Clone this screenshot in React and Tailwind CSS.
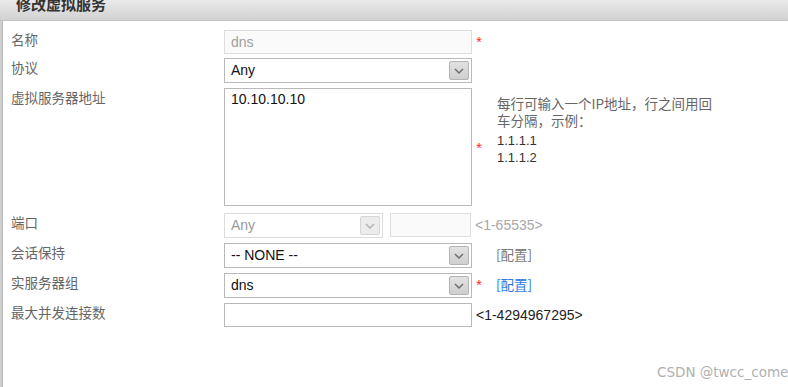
import React from "react";

const cjk = { fontFamily: '"Noto Sans CJK SC", "Liberation Sans", sans-serif' };
const arial = { fontFamily: '"Liberation Sans", Arial, "Noto Sans CJK SC", sans-serif' };

function Arrow({ disabled }) {
  return (
    <div
      className={`absolute right-[2px] top-[2px] w-[20px] h-[19px] rounded-[2px] border flex items-center justify-center ${
        disabled ? "border-[#d6d6d6] bg-[#ececec]" : "border-[#b4b4b4] bg-gradient-to-b from-[#e2e2e2] to-[#cfcfcf]"
      }`}
    >
      <svg width="10" height="6" viewBox="0 0 10 6">
        <path d="M1 1 L5 5 L9 1" fill="none" stroke={disabled ? "#b0b0b0" : "#6a6a6a"} strokeWidth="1.4" />
      </svg>
    </div>
  );
}

function Select({ value, disabled, width = "w-[248px]" }) {
  return (
    <div
      className={`relative ${width} h-[25px] border ${
        disabled ? "border-[#dcdcdc] text-[#9a9a9a]" : "border-[#b9b9b9] text-[#111]"
      } bg-white text-[14px] pl-[6px] leading-[23px]`}
      style={arial}
    >
      {value}
      <Arrow disabled={disabled} />
    </div>
  );
}

function Star({ top }) {
  return (
    <div className="relative w-[12px] self-stretch">
      <span className="absolute left-[4px] text-[#ff2a2a] text-[11px] leading-none" style={{ top }}>*</span>
    </div>
  );
}

function Label({ children }) {
  return (
    <div className="w-[225px] pl-[12px] text-[13.5px] text-[#666] leading-[18px]" style={cjk}>
      {children}
    </div>
  );
}

export default function App() {
  return (
    <div className="w-[788px] h-[387px] bg-white relative overflow-hidden">
      <div className="h-[21px] bg-gradient-to-b from-[#e9e9e9] to-[#d2d2d2] border-b border-[#c4c4c4] flex items-start">
        <div className="pl-[16px] -mt-[6px] text-[15px] font-bold text-[#333] leading-[20px]" style={cjk}>
          修改虚拟服务
        </div>
      </div>
      <div className="flex">
        <div className="w-[3px] h-[366px] bg-[#cfcfcf] border-r border-[#b8b8b8]"></div>
        <div className="flex-1 flex flex-col -ml-[4px]">
          {/* 名称 */}
          <div className="flex items-start mt-[9px] h-[24px]">
            <Label>名称</Label>
            <div
              className="w-[248px] h-[24px] border border-[#dedede] bg-[#fafafa] text-[#a0a0a0] text-[14px] pl-[6px] leading-[22px]"
              style={arial}
            >
              dns
            </div>
            <Star top="5px" />
          </div>
          {/* 协议 */}
          <div className="flex items-start mt-[4px] h-[25px]">
            <Label>协议</Label>
            <Select value="Any" />
          </div>
          {/* 虚拟服务器地址 */}
          <div className="flex items-start mt-[5px] h-[118px]">
            <Label>虚拟服务器地址</Label>
            <div
              className="w-[248px] h-[118px] border border-[#b9b9b9] bg-white text-[14px] text-[#111] pl-[6px] leading-[20px]"
              style={arial}
            >
              10.10.10.10
            </div>
            <Star top="53px" />
            <div className="ml-[13px] mt-[7px] leading-[17px]">
              <div className="text-[13.5px] text-[#666] whitespace-nowrap" style={cjk}>每行可输入一个IP地址，行之间用回</div>
              <div className="text-[13.5px] text-[#666] whitespace-nowrap" style={cjk}>车分隔，示例：</div>
              <div className="text-[13px] text-[#333] mt-[3px]" style={arial}>1.1.1.1</div>
              <div className="text-[13px] text-[#333]" style={arial}>1.1.1.2</div>
            </div>
          </div>
          {/* 端口 */}
          <div className="flex items-start mt-[7px] h-[25px]">
            <Label>端口</Label>
            <Select value="Any" disabled width="w-[159px]" />
            <div className="ml-[7px] w-[81px] h-[24px] border border-[#dedede] bg-[#fafafa]"></div>
            <div className="ml-[4px] text-[14px] text-[#a8a8a8] leading-[25px]" style={arial}>&lt;1-65535&gt;</div>
          </div>
          {/* 会话保持 */}
          <div className="flex items-start mt-[5px] h-[25px]">
            <Label>会话保持</Label>
            <Select value="-- NONE --" />
            <div className="ml-[24px] text-[13.5px] text-[#777] leading-[22px]" style={cjk}>[配置]</div>
          </div>
          {/* 实服务器组 */}
          <div className="flex items-start mt-[5px] h-[25px]">
            <Label>实服务器组</Label>
            <Select value="dns" />
            <Star top="5px" />
            <div className="ml-[12px] text-[13.5px] text-[#2a7ae2] leading-[22px]" style={cjk}>[配置]</div>
          </div>
          {/* 最大并发连接数 */}
          <div className="flex items-start mt-[5px] h-[24px]">
            <Label>最大并发连接数</Label>
            <div className="w-[248px] h-[24px] border border-[#b9b9b9] bg-white"></div>
            <div className="ml-[4px] text-[14px] text-[#222] leading-[24px]" style={arial}>&lt;1-4294967295&gt;</div>
          </div>
        </div>
      </div>
      <div
        className="absolute left-[657px] top-[364px] text-[#b0b0b0] leading-[16px] whitespace-nowrap"
        style={{ fontFamily: '"DejaVu Sans", sans-serif', fontSize: "13.5px" }}
      >
        CSDN @twcc_come
      </div>
    </div>
  );
}
